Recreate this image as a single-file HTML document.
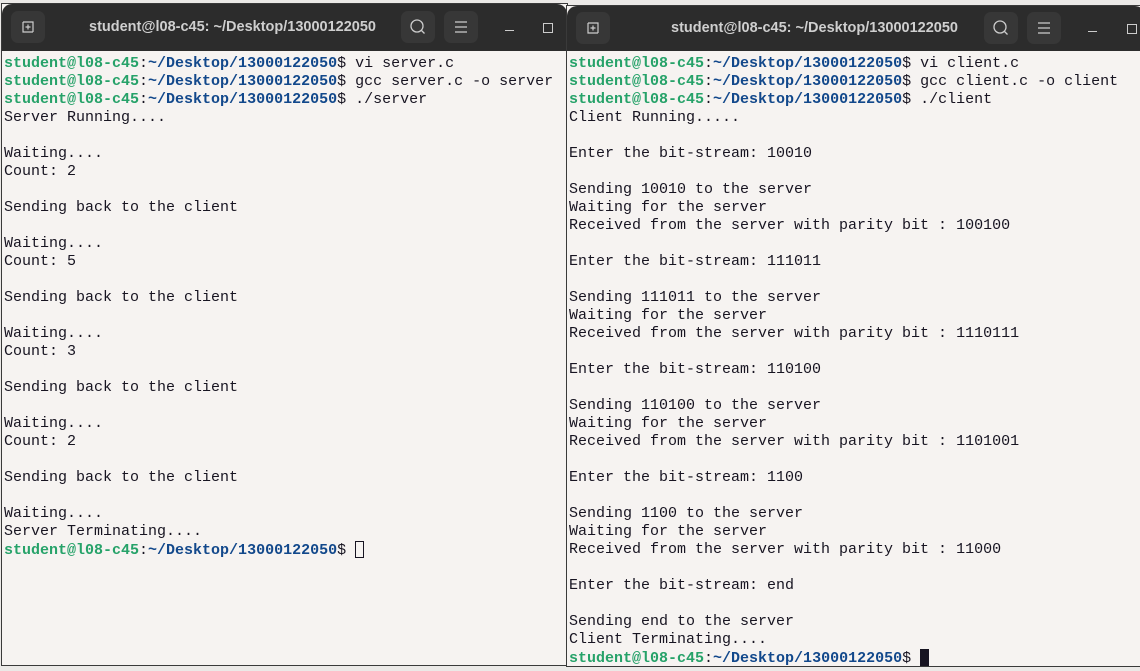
<!DOCTYPE html>
<html><head><style>
body{margin:0;width:1140px;height:671px;background:#ebe9e7;position:relative;overflow:hidden;font-family:"Liberation Sans",sans-serif}
.win{position:absolute;background:#f6f3f1;border:1px solid #3a3a3a;box-sizing:border-box}
.hdr{position:absolute;left:0;right:0;top:0;height:47px;background:#2c2c2c;border-radius:10px 10px 0 0}
.btn{position:absolute;top:7px;width:34px;height:32px;background:#373737;border-radius:7px}
.title{position:absolute;top:0;height:47px;line-height:47px;color:#cfcfcf;font-weight:bold;font-size:14.5px}
pre{position:absolute;margin:0;left:2px;top:51px;font-family:"Liberation Mono",monospace;font-size:15px;line-height:18px;color:#171421}
.g{color:#26a269;font-weight:bold}.b{color:#12488b;font-weight:bold}
.min{position:absolute;top:26px;width:9px;height:1px;background:#ccc}
.max{position:absolute;top:19px;width:8px;height:8px;border:1px solid #ccc}
</style></head><body>
<div class="win" style="left:1px;top:3px;width:567px;height:663px">
 <div class="hdr"></div>
 <div class="btn" style="left:9px"><svg width="34" height="32"><path d="M12 11h10v10M12 11v10h10M17 13.5v5M14.5 16h5" stroke="#ccc" fill="none" stroke-width="1.2"/></svg></div>
 <div class="title" style="left:87px">student@l08-c45: ~/Desktop/13000122050</div>
 <div class="btn" style="left:399px"><svg width="34" height="32"><circle cx="16" cy="15" r="6" stroke="#ccc" fill="none" stroke-width="1.3"/><path d="M20.5 19.5l3 3" stroke="#ccc" stroke-width="1.3"/></svg></div>
 <div class="btn" style="left:442px"><svg width="34" height="32"><path d="M11 11h12M11 16h12M11 21h12" stroke="#ccc" stroke-width="1.2"/></svg></div>
 <div class="min" style="left:503px"></div><div class="max" style="left:541px"></div>
 <pre><span class="g">student@l08-c45</span>:<span class="b">~/Desktop/13000122050</span>$ vi server.c
<span class="g">student@l08-c45</span>:<span class="b">~/Desktop/13000122050</span>$ gcc server.c -o server
<span class="g">student@l08-c45</span>:<span class="b">~/Desktop/13000122050</span>$ ./server
Server Running....

Waiting....
Count: 2

Sending back to the client

Waiting....
Count: 5

Sending back to the client

Waiting....
Count: 3

Sending back to the client

Waiting....
Count: 2

Sending back to the client

Waiting....
Server Terminating....
<span class="g">student@l08-c45</span>:<span class="b">~/Desktop/13000122050</span>$ <span style="display:inline-block;width:9px;height:17px;border:1px solid #171421;vertical-align:-4px;box-sizing:border-box"></span></pre>
</div>
<div class="win" style="left:566px;top:5px;width:580px;height:662px">
 <div class="hdr" style="height:45px"></div>
 <div class="btn" style="left:9px;top:6px"><svg width="34" height="32"><path d="M12 11h10v10M12 11v10h10M17 13.5v5M14.5 16h5" stroke="#ccc" fill="none" stroke-width="1.2"/></svg></div>
 <div class="title" style="left:104px;height:45px;line-height:45px">student@l08-c45: ~/Desktop/13000122050</div>
 <div class="btn" style="left:417px;top:6px"><svg width="34" height="32"><circle cx="16" cy="15" r="6" stroke="#ccc" fill="none" stroke-width="1.3"/><path d="M20.5 19.5l3 3" stroke="#ccc" stroke-width="1.3"/></svg></div>
 <div class="btn" style="left:460px;top:6px"><svg width="34" height="32"><path d="M11 11h12M11 16h12M11 21h12" stroke="#ccc" stroke-width="1.2"/></svg></div>
 <div class="min" style="left:521px;top:25px"></div><div class="max" style="left:560px;top:18px"></div>
 <pre style="top:49px"><span class="g">student@l08-c45</span>:<span class="b">~/Desktop/13000122050</span>$ vi client.c
<span class="g">student@l08-c45</span>:<span class="b">~/Desktop/13000122050</span>$ gcc client.c -o client
<span class="g">student@l08-c45</span>:<span class="b">~/Desktop/13000122050</span>$ ./client
Client Running.....

Enter the bit-stream: 10010

Sending 10010 to the server
Waiting for the server
Received from the server with parity bit : 100100

Enter the bit-stream: 111011

Sending 111011 to the server
Waiting for the server
Received from the server with parity bit : 1110111

Enter the bit-stream: 110100

Sending 110100 to the server
Waiting for the server
Received from the server with parity bit : 1101001

Enter the bit-stream: 1100

Sending 1100 to the server
Waiting for the server
Received from the server with parity bit : 11000

Enter the bit-stream: end

Sending end to the server
Client Terminating....
<span class="g">student@l08-c45</span>:<span class="b">~/Desktop/13000122050</span>$ <span style="display:inline-block;width:9px;height:17px;background:#171421;vertical-align:-4px"></span></pre>
</div>
</body></html>
